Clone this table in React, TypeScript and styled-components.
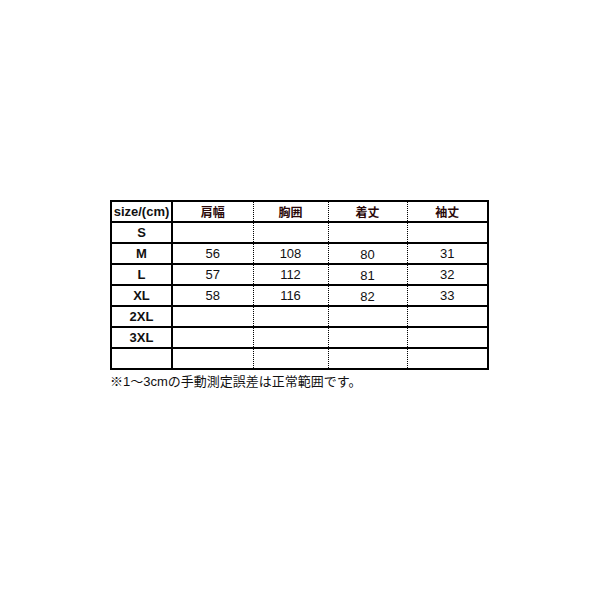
import styled, { createGlobalStyle } from "styled-components";

const GlobalStyle = createGlobalStyle`
  html, body {
    margin: 0;
    padding: 0;
    background: #fff;
  }
  body {
    font-family: "Liberation Sans", "Noto Sans CJK JP", sans-serif;
    color: #000;
  }
`;

const columns = ["肩幅", "胸囲", "着丈", "袖丈"];
const widths = [61, 81, 75, 79, 81];

const rows: { size: string; values: string[] }[] = [
  { size: "S", values: ["", "", "", ""] },
  { size: "M", values: ["56", "108", "80", "31"] },
  { size: "L", values: ["57", "112", "81", "32"] },
  { size: "XL", values: ["58", "116", "82", "33"] },
  { size: "2XL", values: ["", "", "", ""] },
  { size: "3XL", values: ["", "", "", ""] },
  { size: "", values: ["", "", "", ""] },
];

// the 着丈 column sits a little lower in the original chart
const shifts = [0, 0, 2, 0];

export default function App() {
  return (
    <>
      <GlobalStyle />
      <Page>
        <SizeTable>
          <colgroup>
            {widths.map((w, i) => (
              <col key={i} style={{ width: w }} />
            ))}
          </colgroup>
          <thead>
            <tr>
              <LabelCell as="th">size/(cm)</LabelCell>
              {columns.map((c) => (
                <HeadCell key={c}>{c}</HeadCell>
              ))}
            </tr>
          </thead>
          <tbody>
            {rows.map((r, ri) => (
              <tr key={ri}>
                <LabelCell>{r.size}</LabelCell>
                {r.values.map((v, vi) => (
                  <ValueCell key={vi} $shift={shifts[vi]}>
                    {v}
                  </ValueCell>
                ))}
              </tr>
            ))}
          </tbody>
        </SizeTable>
        <Note>※1〜3cmの手動測定誤差は正常範囲です。</Note>
      </Page>
    </>
  );
}

const Page = styled.div`
  padding: 200px 0 0 110px;
`;

const SizeTable = styled.table`
  border-collapse: collapse;
  table-layout: fixed;
  width: 379px;
  border: 2px solid #000;

  tr {
    height: 21px;
  }
`;

const LabelCell = styled.td`
  border-top: 2px solid #000;
  border-right: 2px solid #000;
  padding: 0;
  text-align: center;
  font-size: 13px;
  font-weight: bold;
  color: #111;
  white-space: nowrap;
`;

const HeadCell = styled.th`
  border-top: 2px solid #000;
  border-left: 1px dotted #000;
  padding: 0;
  text-align: center;
  font-family: "Noto Sans CJK JP", sans-serif;
  font-size: 12px;
  font-weight: bold;
  color: #2a0808;
`;

const ValueCell = styled.td<{ $shift: number }>`
  border-top: 2px solid #000;
  border-left: 1px dotted #000;
  padding: ${(p) => p.$shift}px 0 0 0;
  text-align: center;
  font-size: 13px;
  color: #111;
`;

const Note = styled.div`
  margin-top: 4px;
  font-size: 13px;
  line-height: 16px;
  color: #111;
`;
